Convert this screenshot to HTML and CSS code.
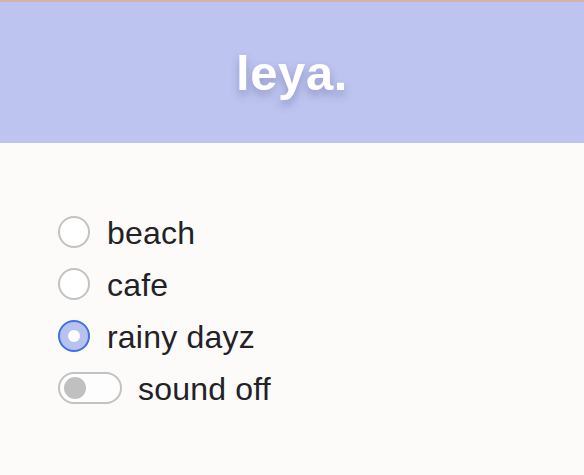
FILE: index.html
```html
<!DOCTYPE html>
<html>
<head>
<meta charset="utf-8">
<link rel="stylesheet" href="styles.css">
</head>
<body>
<header class="header"><h1 class="title">leya.</h1></header>
<main class="content">
  <label class="option"><span class="radio"></span><span class="label">beach</span></label>
  <label class="option"><span class="radio"></span><span class="label">cafe</span></label>
  <label class="option"><span class="radio checked"></span><span class="label">rainy dayz</span></label>
  <label class="option"><span class="toggle"><span class="knob"></span></span><span class="label toggle-label">sound off</span></label>
</main>
</body>
</html>
```
FILE: styles.css
```css
html, body { margin: 0; padding: 0; }
body {
  background: #fcfbf9;
  font-family: "Liberation Sans", Arial, sans-serif;
  color: #222226;
  height: 475px;
}
.header {
  border-top: 2px solid #d6b2ae;
  background: #bcc4ef;
  height: 141px;
  display: flex;
  align-items: center;
  justify-content: center;
}
.title {
  margin: 0;
  padding-top: 1px;
  color: #ffffff;
  font-size: 49px;
  font-weight: bold;
  letter-spacing: 0.6px;
  text-shadow: 0 5px 8px rgba(70, 70, 130, 0.35);
}
.content {
  padding: 73px 0 0 58px;
  display: flex;
  flex-direction: column;
  gap: 20px;
}
.option {
  display: flex;
  align-items: center;
  height: 32px;
}
.radio {
  box-sizing: border-box;
  width: 32px;
  height: 32px;
  border-radius: 50%;
  border: 2px solid #c2c2c2;
  background: #ffffff;
  flex: none;
}
.radio.checked {
  border-color: #3f72e2;
  background: #b9c1f0;
  display: flex;
  align-items: center;
  justify-content: center;
}
.radio.checked::after {
  content: "";
  width: 12px;
  height: 12px;
  border-radius: 50%;
  background: #ffffff;
}
.label {
  font-size: 32px;
  letter-spacing: 0.2px;
  margin-left: 17px;
  padding-top: 3px;
}
.toggle {
  box-sizing: border-box;
  width: 64px;
  height: 32px;
  border-radius: 16px;
  border: 2px solid #c2c2c2;
  background: #fdfdfd;
  display: flex;
  align-items: center;
  padding-left: 4px;
  flex: none;
}
.knob {
  width: 22px;
  height: 22px;
  border-radius: 50%;
  background: #c0c0c0;
}
.toggle-label {
  margin-left: 16px;
}
```
